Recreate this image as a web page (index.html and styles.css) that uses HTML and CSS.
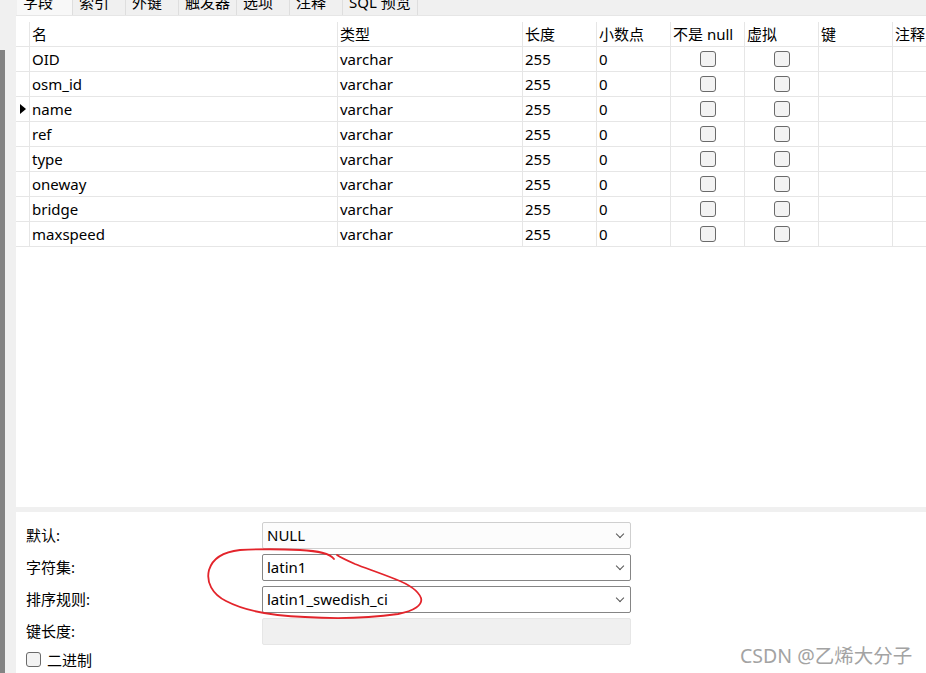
FILE: index.html
```html
<!DOCTYPE html>
<html lang="zh-CN">
<head>
  <meta charset="UTF-8">
  <title>字段</title>
  <link rel="stylesheet" href="styles.css">
</head>
<body>
  <div class="page">
    <div class="edge">
      <div class="edge-top"></div>
      <div class="edge-bar"></div>
    </div>

    <div class="main">
      <div class="tabs">
        <div class="tab active"><span>字段</span></div>
        <div class="tab"><span>索引</span></div>
        <div class="tab"><span>外键</span></div>
        <div class="tab"><span>触发器</span></div>
        <div class="tab"><span>选项</span></div>
        <div class="tab"><span>注释</span></div>
        <div class="tab"><span>SQL 预览</span></div>
      </div>

      <div class="grid-area">
        <div class="grid">
          <div class="cell ind"></div>
          <div class="cell">名</div>
          <div class="cell">类型</div>
          <div class="cell">长度</div>
          <div class="cell">小数点</div>
          <div class="cell">不是 null</div>
          <div class="cell">虚拟</div>
          <div class="cell">键</div>
          <div class="cell">注释</div>

          <div class="cell ind"></div>
          <div class="cell">OID</div>
          <div class="cell">varchar</div>
          <div class="cell">255</div>
          <div class="cell">0</div>
          <div class="cell center"><span class="box"></span></div>
          <div class="cell center"><span class="box"></span></div>
          <div class="cell"></div>
          <div class="cell"></div>

          <div class="cell ind"></div>
          <div class="cell">osm_id</div>
          <div class="cell">varchar</div>
          <div class="cell">255</div>
          <div class="cell">0</div>
          <div class="cell center"><span class="box"></span></div>
          <div class="cell center"><span class="box"></span></div>
          <div class="cell"></div>
          <div class="cell"></div>

          <div class="cell ind"><span class="arrow"></span></div>
          <div class="cell">name</div>
          <div class="cell">varchar</div>
          <div class="cell">255</div>
          <div class="cell">0</div>
          <div class="cell center"><span class="box"></span></div>
          <div class="cell center"><span class="box"></span></div>
          <div class="cell"></div>
          <div class="cell"></div>

          <div class="cell ind"></div>
          <div class="cell">ref</div>
          <div class="cell">varchar</div>
          <div class="cell">255</div>
          <div class="cell">0</div>
          <div class="cell center"><span class="box"></span></div>
          <div class="cell center"><span class="box"></span></div>
          <div class="cell"></div>
          <div class="cell"></div>

          <div class="cell ind"></div>
          <div class="cell">type</div>
          <div class="cell">varchar</div>
          <div class="cell">255</div>
          <div class="cell">0</div>
          <div class="cell center"><span class="box"></span></div>
          <div class="cell center"><span class="box"></span></div>
          <div class="cell"></div>
          <div class="cell"></div>

          <div class="cell ind"></div>
          <div class="cell">oneway</div>
          <div class="cell">varchar</div>
          <div class="cell">255</div>
          <div class="cell">0</div>
          <div class="cell center"><span class="box"></span></div>
          <div class="cell center"><span class="box"></span></div>
          <div class="cell"></div>
          <div class="cell"></div>

          <div class="cell ind"></div>
          <div class="cell">bridge</div>
          <div class="cell">varchar</div>
          <div class="cell">255</div>
          <div class="cell">0</div>
          <div class="cell center"><span class="box"></span></div>
          <div class="cell center"><span class="box"></span></div>
          <div class="cell"></div>
          <div class="cell"></div>

          <div class="cell ind"></div>
          <div class="cell">maxspeed</div>
          <div class="cell">varchar</div>
          <div class="cell">255</div>
          <div class="cell">0</div>
          <div class="cell center"><span class="box"></span></div>
          <div class="cell center"><span class="box"></span></div>
          <div class="cell"></div>
          <div class="cell"></div>
        </div>
      </div>

      <div class="splitter"></div>

      <div class="props">
        <div class="label">默认:</div>
        <div class="field light">NULL<span class="chev"></span></div>

        <div class="label">字符集:</div>
        <div class="field">latin1<span class="chev"></span></div>

        <div class="label">排序规则:</div>
        <div class="field">latin1_swedish_ci<span class="chev"></span></div>

        <div class="label">键长度:</div>
        <div class="field disabled"></div>

        <label class="binary"><span class="box"></span>二进制</label>
      </div>
    </div>

    <!-- 手绘红圈 -->
    <svg class="mark" viewBox="0 0 926 673" width="926" height="673">
      <path d="M334 559 C330 553 318 551 300 550 C280 549 260 549 240 550 C222 552 212 560 209 570 C206 582 212 594 226 601 C245 611 275 616 305 617 C335 619 370 618 398 614 C414 611 423 605 421 598 C418 590 408 584 395 579 C380 573 365 568 355 564 C346 560 340 557 337 555" />
    </svg>

    <div class="watermark">CSDN @乙烯大分子</div>
  </div>
</body>
</html>
```

FILE: styles.css
```css
html, body {
  margin: 0;
  padding: 0;
  background: #f0f0f0;
  overflow: hidden;
}
body {
  font-family: "Noto Sans", "Noto Sans CJK SC", sans-serif;
  font-size: 15px;
  color: #000;
}
.page {
  position: relative;
  width: 926px;
  height: 673px;
  display: flex;
}

/* linker Rand */
.edge {
  width: 16px;
  display: flex;
  flex-direction: column;
}
.edge-top {
  height: 50px;
}
.edge-bar {
  flex: 1;
  background: linear-gradient(to right, #838383 5px, #f0f0f0 5px);
}

.main {
  flex: 1;
  display: flex;
  flex-direction: column;
  min-height: 0;
}

/* Tabs */
.tabs {
  flex-shrink: 0;
  height: 15px;
  display: flex;
  overflow: hidden;
  border-bottom: 1px solid #e6e6e6;
  background: #f0f0f0;
}
.tab {
  min-width: 53px;
  padding: 0 6px;
  box-sizing: border-box;
  border-right: 1px solid #dedede;
  line-height: 15px;
  white-space: nowrap;
}
.tab span {
  display: block;
  margin-top: -5px;
}
.tab.active {
  min-width: 56px;
  background: #f8f8f8;
  margin-left: 1px;
}

/* Tabelle */
.grid-area {
  flex-shrink: 0;
  height: 491px;
  background: #fff;
  padding-top: 6px;
  box-sizing: border-box;
}
.grid {
  display: grid;
  grid-template-columns: 13px 308px 185px 74px 74px 74px 74px 74px 1fr;
  grid-auto-rows: 25px;
}
.cell {
  box-sizing: border-box;
  border-left: 1px solid #e6e6e6;
  border-bottom: 1px solid #e6e6e6;
  padding-left: 2px;
  line-height: 24px;
  white-space: nowrap;
  overflow: hidden;
}
.cell.ind {
  border-left: none;
  padding-left: 4px;
  display: flex;
  align-items: center;
}
.cell.center {
  display: flex;
  justify-content: center;
  align-items: center;
  padding-left: 0;
}
.arrow {
  width: 0;
  height: 0;
  border-top: 5px solid transparent;
  border-bottom: 5px solid transparent;
  border-left: 6px solid #000;
}
.box {
  display: inline-block;
  width: 16px;
  height: 16px;
  box-sizing: border-box;
  border: 1px solid #6a6a6a;
  border-radius: 3px;
  background: #f3f3f3;
}

.splitter {
  flex-shrink: 0;
  height: 5px;
  background: #f0f0f0;
}

/* Eigenschaften */
.props {
  flex: 1;
  min-height: 0;
  overflow: hidden;
  background: #fff;
  padding: 10px 0 0 10px;
  display: grid;
  grid-template-columns: 236px 369px;
  grid-auto-rows: 27px;
  row-gap: 5px;
  align-content: start;
}
.label {
  line-height: 27px;
}
.field {
  position: relative;
  box-sizing: border-box;
  border: 1px solid #858585;
  border-radius: 2px;
  background: #fff;
  padding-left: 4px;
  line-height: 25px;
}
.field.light {
  border-color: #cfcfcf;
  background: #fcfcfc;
}
.field.disabled {
  border-color: #e6e6e6;
  background: #f0f0f0;
}
.chev {
  position: absolute;
  right: 7px;
  top: 8px;
  width: 5px;
  height: 5px;
  border-right: 1px solid #555;
  border-bottom: 1px solid #555;
  transform: rotate(45deg);
}
.binary {
  grid-column: 1 / 3;
  display: flex;
  align-items: center;
  gap: 6px;
  height: 18px;
  margin-top: 0;
}
.binary .box {
  width: 15px;
  height: 15px;
}

.mark {
  position: absolute;
  left: 0;
  top: 0;
  pointer-events: none;
}
.mark path {
  fill: none;
  stroke: #e3242b;
  stroke-width: 1.8;
  stroke-linecap: round;
}

.watermark {
  position: absolute;
  left: 740px;
  top: 640px;
  font-size: 19.5px;
  color: #a3a3a3;
  text-shadow: 0 0 1px #fff;
  white-space: nowrap;
}
```
